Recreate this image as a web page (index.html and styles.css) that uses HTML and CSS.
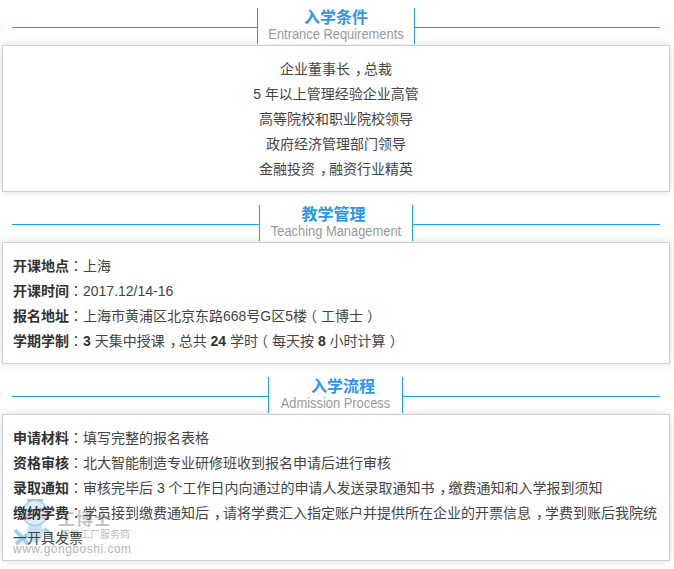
FILE: index.html
```html
<!DOCTYPE html>
<html lang="zh">
<head>
<meta charset="utf-8">
<title>入学条件</title>
<link rel="stylesheet" href="styles.css">
</head>
<body>
<section class="block">
  <header class="head">
    <div class="title"><h2>入学条件</h2><p>Entrance Requirements</p></div>
  </header>
  <div class="card center">
    <p>企业董事长<span class="cm">，</span>总裁</p>
    <p>5 年以上管理经验企业高管</p>
    <p>高等院校和职业院校领导</p>
    <p>政府经济管理部门领导</p>
    <p>金融投资<span class="cm">，</span>融资行业精英</p>
  </div>
</section>
<section class="block alt">
  <header class="head">
    <div class="title t2"><h2>教学管理</h2><p>Teaching Management</p></div>
  </header>
  <div class="card">
    <p><b>开课地点</b><i>：</i>上海</p>
    <p><b>开课时间</b><i>：</i>2017.12/14-16</p>
    <p><b>报名地址</b><i>：</i>上海市黄浦区北京东路668号G区5楼<span class="lp">（</span>工博士<span class="rp">）</span></p>
    <p><b>学期学制</b><i>：</i><b>3</b> 天集中授课<span class="cm">，</span>总共 <b>24</b> 学时<span class="lp">（</span>每天按 <b>8</b> 小时计算<span class="rp">）</span></p>
  </div>
</section>
<section class="block alt">
  <header class="head">
    <div class="title t3"><h2>入学流程</h2><p>Admission Process</p></div>
  </header>
  <div class="card">
    <p><b>申请材料</b><i>：</i>填写完整的报名表格</p>
    <p><b>资格审核</b><i>：</i>北大智能制造专业研修班收到报名申请后进行审核</p>
    <p><b>录取通知</b><i>：</i>审核完毕后 3 个工作日内向通过的申请人发送录取通知书<span class="cm">，</span>缴费通知和入学报到须知</p>
    <p><b>缴纳学费</b><i>：</i>学员接到缴费通知后<span class="cm">，</span>请将学费汇入指定账户并提供所在企业的开票信息<span class="cm">，</span>学费到账后我院统一开具发票</p>
    <div class="mark">
      <svg class="robot" width="46" height="50" viewBox="0 0 46 50">
        <path d="M14 1 L30 1" stroke="#bbb" stroke-width="3" fill="none"/>
        <path d="M2 31 L15 45 M3 45 L15 35 M31 30 L39 36" stroke="#9fd0ef" stroke-width="4" fill="none"/>
        <ellipse cx="22" cy="33" rx="8" ry="11" fill="#c4e2f5"/>
        <circle cx="22" cy="14" r="12.5" fill="#dfeefa" stroke="#a9cbe2" stroke-width="1.5"/>
        <circle cx="17" cy="11" r="1.8" fill="#5f86a8"/>
        <circle cx="27" cy="11" r="1.8" fill="#5f86a8"/>
        <circle cx="14" cy="17" r="2.6" fill="#f5b5cc"/>
        <circle cx="30" cy="17" r="2.6" fill="#f5b5cc"/>
      </svg>
      <span class="brand">工博士</span>
      <span class="slogan">智能工厂服务商</span>
      <span class="url">www.gongboshi.com</span>
    </div>
  </div>
</section>
</body>
</html>
```
FILE: styles.css
```css
html, body { margin: 0; padding: 0; }
body {
  box-sizing: border-box;
  width: 674px;
  height: 569px;
  padding-top: 8px;
  overflow: hidden;
  background: #fff;
  font-family: "Liberation Sans", "Noto Sans CJK SC", sans-serif;
  font-size: 14px;
  color: #444;
}
.block { --rule: #2f96dc; padding: 0 4px 13px 2px; }
.block.alt { --rule: #1f9cf0; }
.head {
  display: flex;
  justify-content: center;
  align-items: center;
  width: 648px;
  height: 37px;
  margin-left: 10px;
  background: linear-gradient(var(--rule), var(--rule)) center 19px / 100% 1px no-repeat;
}
.title {
  position: relative;
  z-index: 1;
  width: 156px;
  height: 36px;
  margin-top: -1px;
  text-align: center;
  background: #fff;
  border-left: 1px solid var(--rule);
  border-right: 1px solid var(--rule);
}
.title.t2 { width: 152px; }
.title.t3 { width: 133px; margin-left: -1px; }
.title h2 { margin: 1px 0 0; font-size: 16px; line-height: 17px; font-weight: 700; color: #2d96ec; }
.title.t2 h2 { padding-right: 5px; }
.title.t3 h2 { padding-left: 15px; }
.title p { margin: 0; font-size: 14px; line-height: 16px; color: #999; transform: scaleX(.92); white-space: nowrap; }
.card {
  position: relative;
  z-index: 0;
  box-sizing: border-box;
  width: 668px;
  padding: 11px 10px 9px;
  background: #fff;
  border: 1px solid #cfcfcf;
  box-shadow: 0 0 8px rgba(0,0,0,.14);
}
.card p { margin: 0; line-height: 25px; }
.card b { color: #333; }
.card i {
  font-style: normal;
  font-family: "Noto Sans CJK TC", sans-serif;
  font-feature-settings: "locl" 0;
  line-height: 1;
}
.cm { padding-left: 5px; margin-right: -5px; }
.lp { padding-right: 4px; margin-left: -4px; }
.rp { padding-left: 4px; margin-right: -4px; }
.center { text-align: center; }
.mark { position: absolute; z-index: -1; left: 8px; top: 84px; width: 130px; height: 62px; pointer-events: none; }
.robot { position: absolute; left: 2px; top: 0; }
.brand { position: absolute; left: 47px; top: 12px; font-size: 17px; line-height: 18px; font-weight: 700; color: #c4c4c4; letter-spacing: 1px; }
.slogan { position: absolute; left: 49px; top: 29px; font-size: 10px; line-height: 13px; color: #bbb; white-space: nowrap; }
.url { position: absolute; left: 2px; top: 43px; font-size: 12px; line-height: 15px; color: #b5b5b5; letter-spacing: .5px; white-space: nowrap; }
```
